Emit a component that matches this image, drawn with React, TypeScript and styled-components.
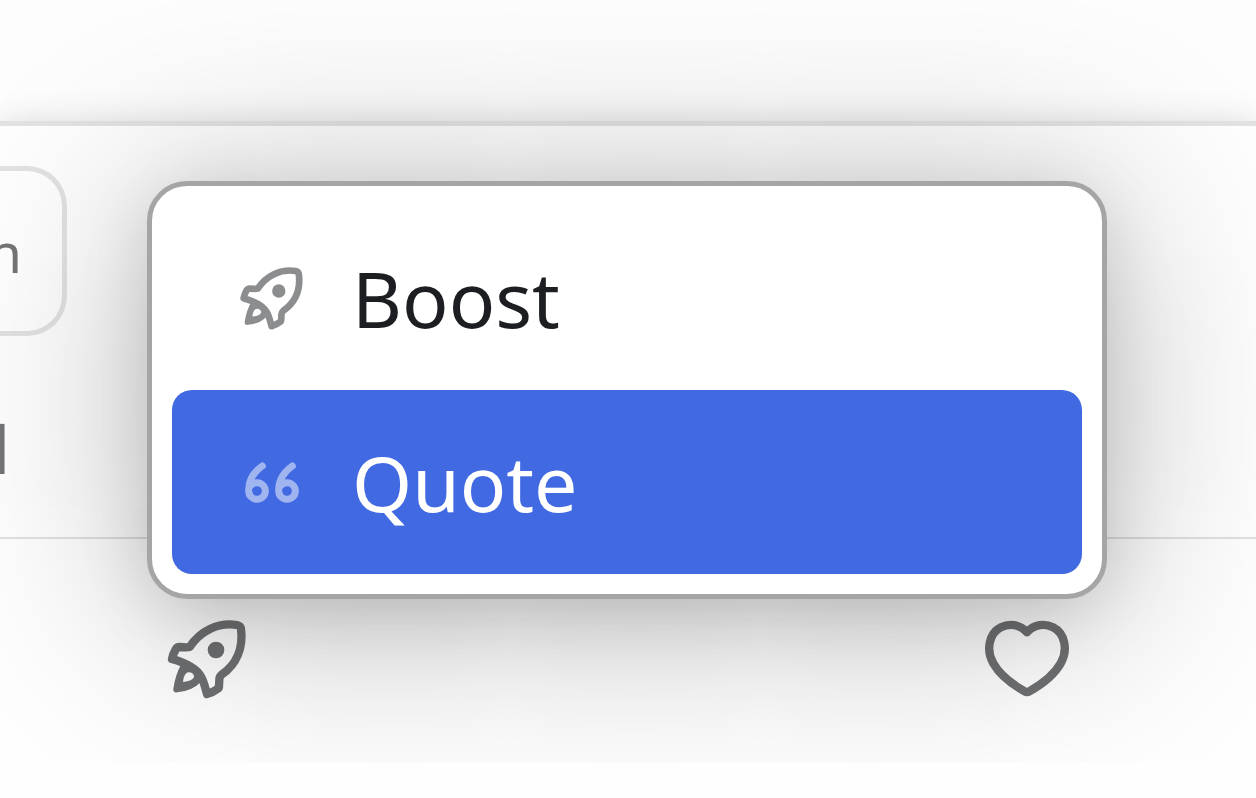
import React from "react";
import styled, { createGlobalStyle } from "styled-components";

const GlobalStyle = createGlobalStyle`
  * { box-sizing: border-box; }
  body {
    margin: 0;
    background: #fdfdfd;
    color: #1c1e21;
    font-family: "Noto Sans", "Open Sans", sans-serif;
    overflow: hidden;
  }
  button { font: inherit; color: inherit; border: 0; background: none; padding: 0; cursor: pointer; }
`;

const Page = styled.main`
  position: relative;
  display: flex;
  flex-direction: column;
  min-height: 100vh;
  padding-top: 121px;
  overflow: hidden;
`;

const Post = styled.article`
  flex: 1;
  display: flex;
  flex-direction: column;
  border-top: 5px solid #e2e2e2;
  background: #fefefe;
  box-shadow: 0 0 30px rgba(0, 0, 0, 0.12);
`;

const Content = styled.div`
  display: flex;
  flex-direction: column;
  align-items: flex-start;
  height: 413px;
  padding-top: 40px;
  border-bottom: 2px solid #e0e0e0;
  color: #737476;
`;

const Tag = styled.button`
  display: flex;
  justify-content: flex-end;
  align-items: center;
  width: 67px;
  height: 170px;
  padding-right: 40px;
  border: 5px solid #e2e2e2;
  border-left: 0;
  border-radius: 0 40px 40px 0;
  font-size: 55px;
  color: #737476;
  overflow: hidden;
`;

const Meta = styled.p`
  display: flex;
  justify-content: flex-end;
  width: 10px;
  margin: 68px 0 0;
  font-size: 65px;
  line-height: 90px;
  overflow: hidden;
`;

const Actions = styled.footer`
  display: flex;
  justify-content: space-between;
  padding: 71px 181px 0 155px;
`;

const ActionButton = styled.button`
  display: flex;
  color: #6f7072;
`;

const Menu = styled.div`
  position: absolute;
  top: 181px;
  left: 147px;
  right: 149px;
  display: flex;
  flex-direction: column;
  padding: 20px;
  border: 5px solid #a5a5a5;
  border-radius: 40px;
  background: #fff;
  box-shadow: 0 15px 80px -15px rgba(0, 0, 0, 0.2), 0 15px 200px rgba(0, 0, 0, 0.3);
`;

const MenuItem = styled.button<{ $active?: boolean }>`
  display: flex;
  align-items: center;
  gap: 42px;
  height: 184px;
  padding: 2px 58px 0;
  border-radius: 20px;
  font-size: 77px;
  line-height: 100px;
  text-align: left;
  background: ${(p) => (p.$active ? "#4169e1" : "transparent")};
  color: ${(p) => (p.$active ? "#fff" : "#1c1e21")};
  svg { opacity: 0.5; }
`;

const Icon = styled.svg<{ $size: number }>`
  display: block;
  flex: none;
  width: ${(p) => p.$size}px;
  height: ${(p) => p.$size}px;
  fill: none;
  stroke: currentColor;
  stroke-width: 25;
  stroke-linecap: round;
  stroke-linejoin: round;
`;

const RocketIcon = ({ size }: { size: number }) => (
  <Icon $size={size} viewBox="0 0 300 300" aria-hidden="true">
    <path d="M104 111 C135 64 188 36 246 45 Q256 47 258 56 C265 112 246 162 200 194 Q193 200 193 208 L192 230 Q192 234 188 236 Q174 247 156 252 C151 235 147 215 138 200 C125 175 90 158 51 147 Q54 132 62 118 Q66 111 74 111 L94 112 Q100 112 104 111 Z" />
    <path
      d="M77 166 Q61 196 55 236 Q54 249 67 247 Q112 242 135 218 L120 180 Z M84 216 Q87 186 103 187 Q117 189 117 201 Q113 213 84 216 Z"
      fill="currentColor"
      fillRule="evenodd"
      stroke="none"
    />
    <circle cx="183" cy="120" r="25" fill="currentColor" stroke="none" />
  </Icon>
);

const HeartIcon = ({ size }: { size: number }) => (
  <Icon $size={size} viewBox="0 0 300 300" aria-hidden="true">
    <path d="M156 67 C134 42 102 40 78 52 C42 70 32 120 55 160 C73 192 112 223 149 244 Q156 248 163 244 C200 223 239 192 257 160 C280 120 270 70 234 52 C210 40 178 42 156 67 Z" />
  </Icon>
);

const QuoteIcon = ({ size }: { size: number }) => (
  <Icon $size={size} viewBox="-15 -24 240 240" aria-hidden="true">
    <g strokeWidth="21">
      <path d="M82 45 C58 62 40 87 41 120 A25 25 0 1 0 66 95 Q52 95 43 108" />
      <path d="M172 45 C148 62 130 87 131 120 A25 25 0 1 0 156 95 Q142 95 133 108" />
    </g>
  </Icon>
);

export default function App() {
  return (
    <>
      <GlobalStyle />
      <Page>
        <Post>
          <Content>
            <Tag>n</Tag>
            <Meta>l</Meta>
          </Content>
          <Actions>
            <ActionButton aria-label="Boost">
              <RocketIcon size={100} />
            </ActionButton>
            <ActionButton aria-label="Like">
              <HeartIcon size={100} />
            </ActionButton>
          </Actions>
        </Post>
        <Menu role="menu">
          <MenuItem role="menuitem">
            <RocketIcon size={80} />
            <span>Boost</span>
          </MenuItem>
          <MenuItem role="menuitem" $active>
            <QuoteIcon size={80} />
            <span>Quote</span>
          </MenuItem>
        </Menu>
      </Page>
    </>
  );
}
